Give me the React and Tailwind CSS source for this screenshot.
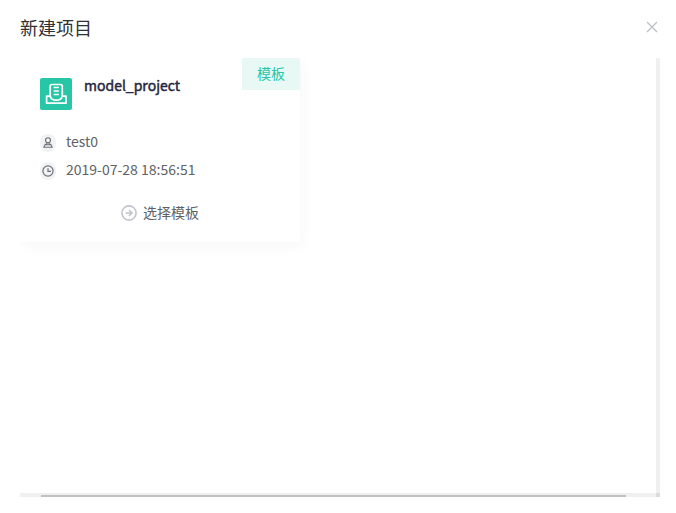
function ProjectIcon() {
  return (
    <svg viewBox="0 0 32 32" className="size-8 shrink-0 rounded-xs bg-[#27c6a6]" fill="none" stroke="#fff" strokeWidth="1.7" strokeLinejoin="round">
      <path d="M10.2 18.2V8.2Q10.2 6.5 11.9 6.5H20.6Q22.3 6.5 22.3 8.2V18.2" />
      <path d="M10.2 18.2H6.6V25.2H26V18.2H22.3C21.6 20.8 19.6 22.2 16.2 22.2S10.9 20.8 10.2 18.2Z" />
      <path d="M13.7 9.5H18.9M13.7 13H18.9M13.7 16.5H18.9" strokeWidth="1.7" />
    </svg>
  );
}

function UserIcon() {
  return (
    <svg viewBox="0 0 16 18" className="mt-0.5 h-[18px] w-4 shrink-0 rounded-full bg-[#f1f2f3]" fill="none" stroke="#6b707a" strokeWidth="1.1" strokeLinejoin="round">
      <circle cx="8" cy="6.3" r="2.5" />
      <path d="M6.9 8.6V9.8L5 10.7L3.8 13.3H12.2L11 10.7L9.1 9.8V8.6M5 10.8H11" />
    </svg>
  );
}

function ClockIcon() {
  return (
    <svg viewBox="0 0 16 18" className="mt-0.5 h-[18px] w-4 shrink-0 rounded-full bg-[#f1f2f3]" fill="none" stroke="#6b707a" strokeWidth="1.2">
      <circle cx="8" cy="9" r="5.1" />
      <path d="M8 6.2V9.4H11" />
    </svg>
  );
}

function ArrowCircleIcon() {
  return (
    <svg viewBox="0 0 16 16" className="size-4 shrink-0" fill="none" stroke="#c0c4cc" strokeWidth="1.6">
      <circle cx="8" cy="8" r="7.1" />
      <path d="M4.6 8H11M8 5L11 8L8 11" />
    </svg>
  );
}

function ProjectCard() {
  return (
    <article className="flex h-[184px] w-[280px] flex-col bg-white shadow-[2px_4px_14px_0_rgba(0,20,15,0.035)]">
      <div className="flex h-[52px] items-start pl-5">
        <div className="mt-5">
          <ProjectIcon />
        </div>
        <h2 className="mt-4 ml-3 flex-1 text-[14px] leading-[22px] font-normal text-[#1f2540] [-webkit-text-stroke:0.45px_#1f2540]">model_project</h2>
        <span className="h-8 w-[58px] bg-[#e8f9f5] text-center text-[14px] leading-[30px] text-[#27c6a6]">模板</span>
      </div>
      <div className="mt-[18px] flex flex-col pl-5 text-[14px] leading-[26px] text-[#606266]">
        <div className="flex h-7 items-center gap-2.5">
          <UserIcon />
          <span className="pb-0.5">test0</span>
        </div>
        <div className="flex h-7 items-center gap-2.5">
          <ClockIcon />
          <span className="pb-0.5">2019-07-28 18:56:51</span>
        </div>
      </div>
      <button className="mt-[19px] flex h-5 items-center justify-center gap-1.5 text-[14px] leading-[18px] text-[#606266]">
        <ArrowCircleIcon />
        <span className="pb-0.5">选择模板</span>
      </button>
    </article>
  );
}

export default function App() {
  return (
    <div className="flex h-[513px] w-[676px] flex-col overflow-hidden bg-white font-['Noto_Sans_CJK_SC',sans-serif]">
      <header className="flex h-[58px] shrink-0 items-start justify-between pr-[18px] pl-5">
        <h1 className="mt-[15px] text-[18px] leading-6 text-[#303133]">新建项目</h1>
        <button className="mt-[21px]" aria-label="关闭">
          <svg viewBox="0 0 12 12" className="size-3" stroke="#b9bcc3" strokeWidth="1.1">
            <path d="M1 1L11 11M11 1L1 11" />
          </svg>
        </button>
      </header>
      <main className="ml-5 flex h-[439px] w-[640px] flex-col overflow-hidden">
        <div className="flex h-[435px]">
          <div className="w-[636px]">
            <ProjectCard />
          </div>
          <div className="w-1 bg-[#f0f0f0]" />
        </div>
        <div className="flex h-1">
          <div className="flex w-[636px] items-end bg-[#f0f0f0]">
            <div className="ml-[21px] h-0.5 w-[585px] bg-[#c1c1c1]" />
          </div>
          <div className="w-1 bg-[#dcdcdc]" />
        </div>
      </main>
    </div>
  );
}
